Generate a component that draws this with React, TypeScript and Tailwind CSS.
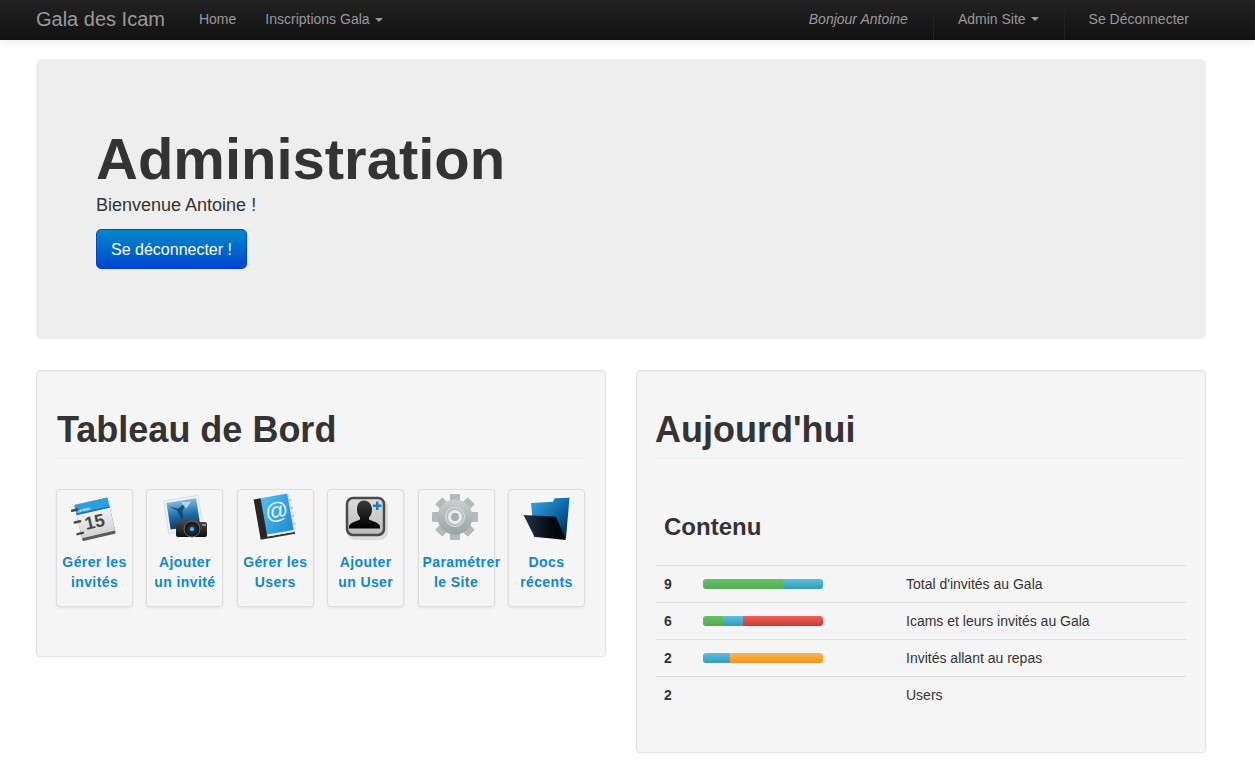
const CalendarIcon = () => (
  <svg viewBox="0 0 48 48" className="w-12 h-12">
    <defs>
      <linearGradient id="calPage" x1="0" y1="0" x2="0" y2="1">
        <stop offset="0" stopColor="#ffffff" />
        <stop offset="1" stopColor="#d4d4d4" />
      </linearGradient>
    </defs>
    <g transform="rotate(-13 23 26)">
      <rect x="7" y="8" width="34" height="37" rx="1" fill="#5c5c5c" />
      <rect x="7" y="8" width="34" height="34" fill="url(#calPage)" />
      <rect x="7" y="8" width="34" height="10" fill="#2a9fe0" />
      <rect x="7" y="17" width="34" height="1.500" fill="#1b6ea8" />
      <text x="9" y="16" fontSize="3.500" fontWeight="700" fill="#fff" fontFamily="Liberation Sans">16 NOV</text>
      <text x="13" y="35" fontSize="18" fontWeight="700" fill="#484848" fontFamily="Liberation Sans">15</text>
      <path d="M9 13H3.500M9 25H3.500M9 37H3.500" stroke="#4a4a4a" strokeWidth="2.500" strokeLinecap="round" />
    </g>
  </svg>
);

const CameraIcon = () => (
  <svg viewBox="0 0 48 48" className="w-12 h-12">
    <defs>
      <linearGradient id="photoSky" x1="0" y1="0" x2="0" y2="1">
        <stop offset="0" stopColor="#7fb9dc" />
        <stop offset="0.55" stopColor="#1a6ca6" />
        <stop offset="1" stopColor="#0a3c68" />
      </linearGradient>
      <linearGradient id="camBody" x1="0" y1="0" x2="0" y2="1">
        <stop offset="0" stopColor="#4e4e4e" />
        <stop offset="1" stopColor="#101010" />
      </linearGradient>
    </defs>
    <g transform="rotate(-9 22 22)">
      <rect x="5" y="5" width="35" height="33" fill="#eef2f5" stroke="#c5ccd2" strokeWidth="0.500" />
      <rect x="7.500" y="7.500" width="30" height="27" fill="url(#photoSky)" />
      <path d="M9 11l9 4 11-6-7 9-1 11-4-12z" fill="#0b3a60" opacity="0.75" />
      <path d="M22 9l10 1-6 6z" fill="#d5e9f5" opacity="0.8" />
    </g>
    <path d="M17 30l2-1 2-3h14l2 3h7a2 2 0 0 1 2 2v11a2 2 0 0 1-2 2H17a2 2 0 0 1-2-2V32a2 2 0 0 1 2-2z" fill="url(#camBody)" />
    <circle cx="31" cy="36" r="8" fill="#1c1c1c" stroke="#6a6a6a" strokeWidth="1" />
    <circle cx="31" cy="36" r="4.500" fill="#12324e" />
    <circle cx="31" cy="36" r="2" fill="#6fb2dc" />
    <rect x="41" y="31" width="4" height="2" fill="#8a8a8a" />
  </svg>
);

const AddressIcon = () => (
  <svg viewBox="0 0 48 48" className="w-12 h-12">
    <defs>
      <linearGradient id="bookBlue" x1="0" y1="0" x2="1" y2="1">
        <stop offset="0" stopColor="#52bdf2" />
        <stop offset="1" stopColor="#2189cf" />
      </linearGradient>
    </defs>
    <g transform="rotate(-10 24 24)">
      <path d="M40.500 4v38" stroke="#dcdcdc" strokeWidth="2.500" />
      <path d="M41 10h2M41 18h2M41 26h2M41 34h2" stroke="#b0b0b0" strokeWidth="1.500" />
      <rect x="6" y="42" width="35" height="2" fill="#333" />
      <rect x="6" y="40" width="35" height="2" fill="#e8e8e8" />
      <rect x="12" y="3" width="28" height="37" fill="url(#bookBlue)" />
      <rect x="6" y="3" width="7" height="40" fill="#262626" />
      <text x="15" y="26" fontSize="23" fill="#e3f4fe" fontFamily="Liberation Sans">@</text>
    </g>
  </svg>
);

const AddUserIcon = () => (
  <svg viewBox="0 0 48 48" className="w-12 h-12">
    <defs>
      <linearGradient id="userFace" x1="0" y1="0" x2="0" y2="1">
        <stop offset="0" stopColor="#dcdcdc" />
        <stop offset="1" stopColor="#bcbcbc" />
      </linearGradient>
      <linearGradient id="userShape" x1="0" y1="0" x2="0" y2="1">
        <stop offset="0" stopColor="#3a3a3a" />
        <stop offset="1" stopColor="#000000" />
      </linearGradient>
    </defs>
    <rect x="5" y="6" width="41" height="41" rx="8" fill="#000" opacity="0.1" />
    <rect x="5" y="5" width="37" height="37" rx="6" fill="url(#userFace)" stroke="#4a4a4a" strokeWidth="2.500" />
    <path d="M22 7.500c5 0 8 4 8 9 0 3-1 6-3 8v2c4 2 9 2.500 11 6.500v2.500H7V33c2-4 7-4.500 11-6.500v-2c-2-2-3-5-3-8 0-5 2-9 7-9z" fill="url(#userShape)" />
    <path d="M31 11.500h3v-3h2.500v3h3V14h-3v3H34v-3h-3z" fill="#1c7fb8" />
  </svg>
);

const GearIcon = () => (
  <svg viewBox="0 0 48 48" className="w-12 h-12">
    <defs>
      <linearGradient id="gearFill" x1="0" y1="0" x2="0" y2="1">
        <stop offset="0" stopColor="#c8cfcf" />
        <stop offset="1" stopColor="#98a3a3" />
      </linearGradient>
    </defs>
    <g transform="translate(23 24)">
      {[0, 45, 90, 135, 180, 225, 270, 315].map((deg) => (
        <rect key={deg} x="-5" y="-23" width="10" height="12" rx="1" fill="#b2baba" transform={`rotate(${deg})`} />
      ))}
      <circle r="17.500" fill="url(#gearFill)" />
      <circle r="9.500" fill="#b7bfbf" stroke="#dde2e2" strokeWidth="1" />
      <circle r="7" fill="#e9eded" />
      <circle r="4" fill="#a6afaf" />
    </g>
  </svg>
);

const FolderIcon = () => (
  <svg viewBox="0 0 48 48" className="w-12 h-12">
    <defs>
      <linearGradient id="folderBack" x1="0" y1="0" x2="1" y2="1">
        <stop offset="0" stopColor="#37a9ea" />
        <stop offset="0.6" stopColor="#0b5d9c" />
        <stop offset="1" stopColor="#041f38" />
      </linearGradient>
      <linearGradient id="folderFront" x1="0" y1="0" x2="1" y2="0">
        <stop offset="0" stopColor="#20384c" />
        <stop offset="0.6" stopColor="#060b12" />
        <stop offset="1" stopColor="#000000" />
      </linearGradient>
    </defs>
    <path d="M9 10L31 8.700 32.500 5.300 47.500 4.700 44 45 12 44z" fill="url(#folderBack)" />
    <path d="M1.500 22L34 23.700 44 47 12.500 43.700z" fill="url(#folderFront)" />
  </svg>
);

const tiles = [
  { icon: <CalendarIcon />, lines: ["Gérer les", "invités"] },
  { icon: <CameraIcon />, lines: ["Ajouter", "un invité"] },
  { icon: <AddressIcon />, lines: ["Gérer les", "Users"] },
  { icon: <AddUserIcon />, lines: ["Ajouter", "un User"] },
  { icon: <GearIcon />, lines: ["Paramétrer", "le Site"] },
  { icon: <FolderIcon />, lines: ["Docs", "récents"] },
];

const green = "bg-gradient-to-b from-[#62c462] to-[#57a957]";
const blue = "bg-gradient-to-b from-[#5bc0de] to-[#339bb9]";
const red = "bg-gradient-to-b from-[#ee5f5b] to-[#c43c35]";
const orange = "bg-gradient-to-b from-[#fbb450] to-[#f89406]";

const rows = [
  { count: 9, label: "Total d'invités au Gala", bars: [`w-[80px] ${green}`, `w-[40px] ${blue}`] },
  { count: 6, label: "Icams et leurs invités au Gala", bars: [`w-[20px] ${green}`, `w-[20px] ${blue}`, `w-[80px] ${red}`] },
  { count: 2, label: "Invités allant au repas", bars: [`w-[27px] ${blue}`, `w-[93px] ${orange}`] },
  { count: 2, label: "Users", bars: [] as string[] },
];

const Caret = () => (
  <span className="inline-block ml-[5px] align-middle w-0 h-0 border-x-4 border-x-transparent border-t-4 border-t-[#999]" />
);

const Navbar = () => (
  <div className="h-10 bg-gradient-to-b from-[#222222] to-[#111111] shadow-[0_1px_10px_rgba(0,0,0,0.1)]">
    <div className="w-[1178px] ml-[36px] h-full flex items-center justify-between text-sm text-[#999]">
      {/* LEFT */}
      <div className="flex items-center pb-[2px]">
        <div className="text-xl mr-[19px]">Gala des Icam</div>
        <div className="pl-[15px] pr-[14px]">Home</div>
        <div className="px-[15px]">
          Inscriptions Gala
          <Caret />
        </div>
      </div>
      {/* RIGHT */}
      <div className="flex items-center h-full">
        <div className="px-[25px] italic pb-[2px]">Bonjour Antoine</div>
        <div className="pl-[24px] pr-[25px] h-full pb-[2px] flex items-center border-x border-[#222]">
          Admin Site
          <Caret />
        </div>
        <div className="pl-[24px] pr-[25px] pb-[2px]">Se Déconnecter</div>
      </div>
    </div>
  </div>
);

export default function App() {
  return (
    <div className="min-h-[765px] bg-white text-sm text-[#333] font-['Liberation_Sans',Arial,sans-serif]">
      <Navbar />
      <div className="w-[1170px] ml-[36px]">
        {/* HERO */}
        <div className="mt-[19px] h-[280px] bg-[#eeeeee] rounded-md p-[60px]">
          <h1 className="text-[58px] leading-[80px] font-bold">Administration</h1>
          <p className="text-lg leading-[26px] -mt-[7px]">Bienvenue Antoine !</p>
          <button className="mt-[11px] w-[151px] h-10 pt-[2px] rounded-[5px] border border-[#0044cc] bg-gradient-to-b from-[#0088cc] to-[#0044cc] text-white text-base">
            Se déconnecter !
          </button>
        </div>

        <div className="mt-[31px] flex items-start justify-between">
          {/* TABLEAU DE BORD */}
          <div className="w-[570px] h-[287px] bg-[#f5f5f5] border border-[#e3e3e3] rounded shadow-[inset_0_1px_1px_rgba(0,0,0,0.05)] px-[19px]">
            <h2 className="mt-[39px] h-[49px] pl-px text-4xl leading-[40px] font-bold border-b border-[#eeeeee]">
              Tableau de Bord
            </h2>
            <div className="mt-[30px] mr-px flex justify-between">
              {tiles.map((tile) => (
                <div
                  key={tile.lines[0] + tile.lines[1]}
                  className="w-[77px] h-[118px] bg-[#f5f5f5] border border-[#dddddd] rounded shadow-[0_1px_3px_rgba(0,0,0,0.08)] px-1 pt-[3px] text-center"
                >
                  <div className="flex justify-center">{tile.icon}</div>
                  <div className="mt-[11px] font-bold leading-5 text-[#0f88cf] tracking-[0.4px]">
                    {tile.lines[0]}
                    <br />
                    {tile.lines[1]}
                  </div>
                </div>
              ))}
            </div>
          </div>

          {/* AUJOURD'HUI */}
          <div className="w-[570px] h-[383px] bg-[#f5f5f5] border border-[#e3e3e3] rounded shadow-[inset_0_1px_1px_rgba(0,0,0,0.05)] px-[19px]">
            <h2 className="mt-[39px] h-[49px] text-4xl leading-[40px] font-bold border-b border-[#eeeeee]">
              <span className="-ml-px">Aujourd'hui</span>
            </h2>
            <h3 className="mt-[52px] ml-[8px] text-2xl leading-[32px] font-bold">Contenu</h3>
            <table className="mt-[22px] w-[530px] border-collapse">
              <tbody>
                {rows.map((row) => (
                  <tr key={row.label} className="h-[37px] border-t border-[#dddddd]">
                    <td className="w-[39px] pl-2 font-bold">{row.count}</td>
                    <td className="w-[203px] pl-2">
                      {row.bars.length > 0 && (
                        <div className="flex w-[120px] h-[10px] rounded-[3px] overflow-hidden">
                          {row.bars.map((bar) => (
                            <div key={bar} className={`h-full ${bar}`} />
                          ))}
                        </div>
                      )}
                    </td>
                    <td className="pl-2">{row.label}</td>
                  </tr>
                ))}
              </tbody>
            </table>
          </div>
        </div>
      </div>
    </div>
  );
}
